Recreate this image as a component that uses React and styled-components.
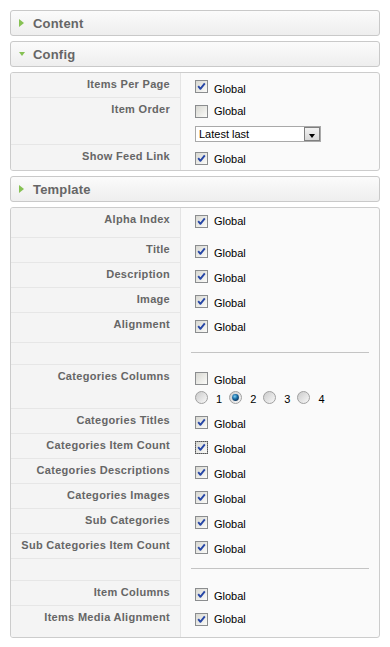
import React from "react";
import styled, { createGlobalStyle } from "styled-components";

const GlobalStyle = createGlobalStyle`
  body {
    margin: 0;
    background: #ffffff;
    font-family: "Liberation Sans", Arial, sans-serif;
  }
`;

const Page = styled.div`
  width: 370px;
  padding: 10px;
  display: flex;
  flex-direction: column;
  gap: 5px;
`;

const Header = styled.div`
  box-sizing: border-box;
  height: 26px;
  display: flex;
  align-items: center;
  gap: 8px;
  padding-left: 7px;
  border: 1px solid #c9c9c9;
  border-radius: 3px;
  background: linear-gradient(#fbfbfb, #eeeeee);
  color: #666666;
  font-size: 13px;
  font-weight: bold;
  letter-spacing: 0.2px;
`;

const Arrow = styled.span`
  width: 7px;
  height: 8px;
  display: flex;
  align-items: center;
  justify-content: center;

  &::before {
    content: "";
    width: 0;
    height: 0;
    ${(p) =>
      p.$open
        ? `border-top: 4px solid #86c153;
           border-left: 3.5px solid transparent;
           border-right: 3.5px solid transparent;`
        : `border-left: 5px solid #86c153;
           border-top: 4px solid transparent;
           border-bottom: 4px solid transparent;`}
  }
`;

const Panel = styled.div`
  border: 1px solid #cccccc;
  border-radius: 3px;
  background: #fafafa;
  overflow: hidden;
`;

const Row = styled.div`
  display: grid;
  grid-template-columns: 170px 1fr;
  height: ${(p) => p.$h}px;
`;

const Label = styled.div`
  box-sizing: border-box;
  padding: 5px 10px 0 0;
  text-align: right;
  background: #f4f4f4;
  border-right: 1px solid #e4e4e4;
  border-bottom: ${(p) => (p.$last ? "none" : "1px solid #e6e6e6")};
  color: #666666;
  font-size: 11px;
  line-height: 13px;
  font-weight: bold;
  letter-spacing: 0.3px;
`;

const Value = styled.div`
  padding: 7px 0 0 14px;
  display: flex;
  flex-direction: column;
  align-items: flex-start;
`;

const Spacer = styled.div`
  padding: 9px 10px 0 10px;
`;

const Rule = styled.div`
  height: 1px;
  background: #c4c4c4;
`;

const CheckLine = styled.label`
  display: flex;
  align-items: flex-start;
  gap: 6px;
  font-size: 11px;
  line-height: 13px;
  color: #000000;
`;

const CheckText = styled.span`
  margin-top: ${(p) => p.$drop}px;
`;

const BoxWrap = styled.span`
  display: block;
  width: 13px;
  height: 13px;
  outline: ${(p) => (p.$focus ? "1px dotted #555555" : "none")};
  outline-offset: -1px;
`;

const Select = styled.div`
  box-sizing: border-box;
  margin-top: 8px;
  width: 126px;
  height: 16px;
  border: 1px solid #a9a9a9;
  background: #ffffff;
  display: flex;
  align-items: center;
  justify-content: space-between;
  padding-left: 3px;
  font-size: 11px;
  color: #000000;
`;

const SelectButton = styled.span`
  box-sizing: border-box;
  width: 16px;
  height: 14px;
  border: 1px solid #7f7f7f;
  background: linear-gradient(#f2f2f2, #d8d8d8);
  display: flex;
  align-items: center;
  justify-content: center;
  padding-top: 3px;

  &::before {
    content: "";
    border-top: 4px solid #000000;
    border-left: 3.5px solid transparent;
    border-right: 3.5px solid transparent;
  }
`;

const Radios = styled.div`
  margin-top: 4px;
  display: flex;
  align-items: flex-start;
`;

const RadioItem = styled.label`
  display: flex;
  align-items: flex-start;
  gap: 8px;
  margin-right: 7px;
  font-size: 11px;
  line-height: 13px;
  color: #000000;

  span {
    margin-top: 2px;
  }
`;

function CheckBox({ checked, focus }) {
  return (
    <BoxWrap $focus={focus}>
      <svg width="13" height="13" viewBox="0 0 13 13">
        <defs>
          <linearGradient id="cbFill" x1="0" y1="0" x2="1" y2="1">
            <stop offset="0" stopColor="#d6d6d0" />
            <stop offset="1" stopColor="#fdfdfb" />
          </linearGradient>
        </defs>
        <rect x="0.5" y="0.5" width="12" height="12" fill="url(#cbFill)" stroke="#8b8d8f" />
        {checked && (
          <path
            d="M3.2 6.2 L5.4 8.8 L9.8 3.4"
            fill="none"
            stroke="#2646a6"
            strokeWidth="1.9"
            strokeLinejoin="round"
          />
        )}
      </svg>
    </BoxWrap>
  );
}

function Radio({ checked }) {
  return (
    <svg width="13" height="13" viewBox="0 0 13 13">
      <defs>
        <linearGradient id="rdFill" x1="0" y1="0" x2="1" y2="1">
          <stop offset="0" stopColor="#c9c9c9" />
          <stop offset="1" stopColor="#fafafa" />
        </linearGradient>
        <radialGradient id="rdDot" cx="0.4" cy="0.35" r="0.7">
          <stop offset="0" stopColor="#7fd0f2" />
          <stop offset="0.5" stopColor="#1b6fa8" />
          <stop offset="1" stopColor="#0b2f55" />
        </radialGradient>
      </defs>
      <circle cx="6.5" cy="6.5" r="6" fill="url(#rdFill)" stroke="#a0a0a0" />
      {checked && <circle cx="6.5" cy="6.5" r="3.4" fill="url(#rdDot)" />}
    </svg>
  );
}

function Check({ checked = true, drop = 2, focus }) {
  return (
    <CheckLine>
      <CheckBox checked={checked} focus={focus} />
      <CheckText $drop={drop}>Global</CheckText>
    </CheckLine>
  );
}

function Field({ label, h = 25, last, children }) {
  return (
    <Row $h={h}>
      <Label $last={last}>{label}</Label>
      <Value>{children}</Value>
    </Row>
  );
}

function Divider() {
  return (
    <Row $h={22}>
      <Label />
      <Spacer>
        <Rule />
      </Spacer>
    </Row>
  );
}

const templateFields = [
  { label: "Categories Titles" },
  { label: "Categories Item Count", focus: true },
  { label: "Categories Descriptions" },
  { label: "Categories Images" },
  { label: "Sub Categories" },
  { label: "Sub Categories Item Count" },
];

export default function App() {
  return (
    <>
      <GlobalStyle />
      <Page>
        <Header>
          <Arrow />
          Content
        </Header>
        <Header>
          <Arrow $open />
          Config
        </Header>
        <Panel>
          <Field label="Items Per Page">
            <Check drop={3} />
          </Field>
          <Field label="Item Order" h={47}>
            <Check checked={false} drop={0} />
            <Select>
              Latest last
              <SelectButton />
            </Select>
          </Field>
          <Field label="Show Feed Link" last>
            <Check drop={1} />
          </Field>
        </Panel>
        <Header>
          <Arrow />
          Template
        </Header>
        <Panel>
          <Field label="Alpha Index" h={30}>
            <Check drop={0} />
          </Field>
          <Field label="Title">
            <Check />
          </Field>
          <Field label="Description">
            <Check />
          </Field>
          <Field label="Image">
            <Check />
          </Field>
          <Field label="Alignment" h={30}>
            <Check drop={1} />
          </Field>
          <Divider />
          <Field label="Categories Columns" h={44}>
            <Check checked={false} />
            <Radios>
              {[1, 2, 3, 4].map((n) => (
                <RadioItem key={n}>
                  <Radio checked={n === 2} />
                  <span>{n}</span>
                </RadioItem>
              ))}
            </Radios>
          </Field>
          {templateFields.map((f) => (
            <Field key={f.label} label={f.label}>
              <Check focus={f.focus} />
            </Field>
          ))}
          <Divider />
          <Field label="Item Columns">
            <Check />
          </Field>
          <Field label="Items Media Alignment" h={31} last>
            <Check drop={0} />
          </Field>
        </Panel>
      </Page>
    </>
  );
}
